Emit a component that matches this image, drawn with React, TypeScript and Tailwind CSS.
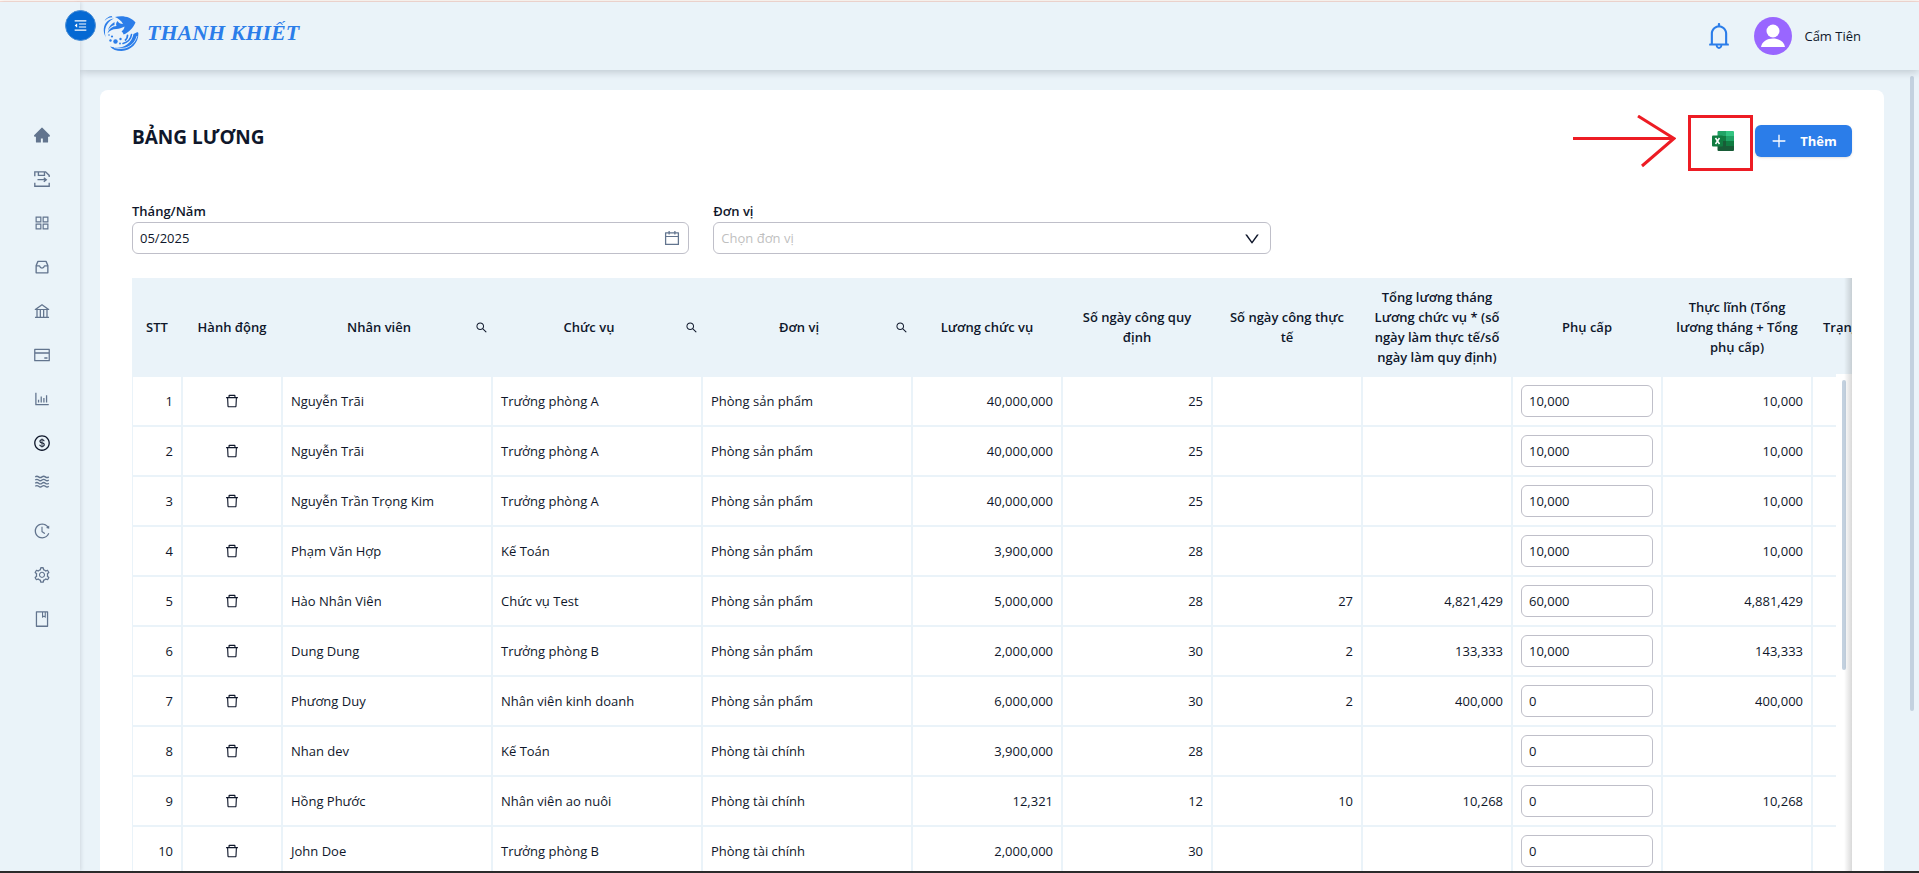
import React from 'react';
import {
  AiFillHome,
  AiOutlineAppstore,
  AiOutlineBank,
  AiOutlineBarChart,
  AiOutlineBell,
  AiOutlineBook,
  AiOutlineCalendar,
  AiOutlineCreditCard,
  AiOutlineDelete,
  AiOutlineDollarCircle,
  AiOutlineDown,
  AiOutlineHistory,
  AiOutlineMenuFold,
  AiOutlinePlus,
  AiOutlineSearch,
  AiOutlineSetting,
} from 'react-icons/ai';
import clsx from 'clsx';

interface SalaryRow {
  name: string;
  position: string;
  unit: string;
  base: string;
  required: string;
  actual: string;
  total: string;
  allowance: string;
  net: string;
}

const ROWS: SalaryRow[] = [
  { name: 'Nguyễn Trãi', position: 'Trưởng phòng A', unit: 'Phòng sản phẩm', base: '40,000,000', required: '25', actual: '', total: '', allowance: '10,000', net: '10,000' },
  { name: 'Nguyễn Trãi', position: 'Trưởng phòng A', unit: 'Phòng sản phẩm', base: '40,000,000', required: '25', actual: '', total: '', allowance: '10,000', net: '10,000' },
  { name: 'Nguyễn Trần Trọng Kim', position: 'Trưởng phòng A', unit: 'Phòng sản phẩm', base: '40,000,000', required: '25', actual: '', total: '', allowance: '10,000', net: '10,000' },
  { name: 'Phạm Văn Hợp', position: 'Kế Toán', unit: 'Phòng sản phẩm', base: '3,900,000', required: '28', actual: '', total: '', allowance: '10,000', net: '10,000' },
  { name: 'Hào Nhân Viên', position: 'Chức vụ Test', unit: 'Phòng sản phẩm', base: '5,000,000', required: '28', actual: '27', total: '4,821,429', allowance: '60,000', net: '4,881,429' },
  { name: 'Dung Dung', position: 'Trưởng phòng B', unit: 'Phòng sản phẩm', base: '2,000,000', required: '30', actual: '2', total: '133,333', allowance: '10,000', net: '143,333' },
  { name: 'Phương Duy', position: 'Nhân viên kinh doanh', unit: 'Phòng sản phẩm', base: '6,000,000', required: '30', actual: '2', total: '400,000', allowance: '0', net: '400,000' },
  { name: 'Nhan dev', position: 'Kế Toán', unit: 'Phòng tài chính', base: '3,900,000', required: '28', actual: '', total: '', allowance: '0', net: '' },
  { name: 'Hồng Phước', position: 'Nhân viên ao nuôi', unit: 'Phòng tài chính', base: '12,321', required: '12', actual: '10', total: '10,268', allowance: '0', net: '10,268' },
  { name: 'John Doe', position: 'Trưởng phòng B', unit: 'Phòng tài chính', base: '2,000,000', required: '30', actual: '', total: '', allowance: '0', net: '' },
];

const COLUMNS = [
  { title: 'STT', width: 'w-[50px]' },
  { title: 'Hành động', width: 'w-[100px]' },
  { title: 'Nhân viên', width: 'w-[210px]', search: true },
  { title: 'Chức vụ', width: 'w-[210px]', search: true },
  { title: 'Đơn vị', width: 'w-[210px]', search: true },
  { title: 'Lương chức vụ', width: 'w-[150px]' },
  { title: 'Số ngày công quy định', width: 'w-[150px]' },
  { title: 'Số ngày công thực tế', width: 'w-[150px]' },
  { title: 'Tổng lương tháng Lương chức vụ * (số ngày làm thực tế/số ngày làm quy định)', width: 'w-[150px]' },
  { title: 'Phụ cấp', width: 'w-[150px]' },
  { title: 'Thực lĩnh (Tổng lương tháng + Tổng phụ cấp)', width: 'w-[150px]' },
  { title: 'Trạng thái', width: 'w-[80px]' },
];

const SaveMoveIcon = ({ size }: { size: number }) => (
  <svg width={size} height={size} viewBox="0 0 16 16" fill="none" stroke="currentColor" strokeWidth="1.2">
    <path d="M1.6 5.6V1.6h9.6l3.2 3.2v1.4M4.8 1.8v3h5.4v-3M1.6 11.4v3h12.8v-3M4 8.6h7.6M9.6 6.8l2.2 1.8-2.2 1.8" />
  </svg>
);

const InboxIcon = ({ size }: { size: number }) => (
  <svg width={size} height={size} viewBox="0 0 16 16" fill="none" stroke="currentColor" strokeWidth="1.2" strokeLinejoin="round">
    <path d="M4.4 3h7.200l1.600 3.600v6.600H2.800V6.600zM2.800 7h3c.4 1.400 1.100 2 2.200 2s1.800-.6 2.200-2h3" />
  </svg>
);

const WavesIcon = ({ size }: { size: number }) => (
  <svg width={size} height={size} viewBox="0 0 16 16" fill="none" stroke="currentColor" strokeWidth="1.2" overflow="visible">
    {[-1, 1.8, 4.6, 7.4].map((y) => (
      <path key={y} d={`M2 ${y}q1.500-1.200 3 0t3 0 3 0 3 0`} />
    ))}
  </svg>
);

const MENU = [
  { label: 'Trang chủ', icon: AiFillHome },
  { label: 'Nhập xuất', icon: SaveMoveIcon },
  { label: 'Danh mục', icon: AiOutlineAppstore },
  { label: 'Kho', icon: InboxIcon },
  { label: 'Ngân hàng', icon: AiOutlineBank },
  { label: 'Thanh toán', icon: AiOutlineCreditCard },
  { label: 'Báo cáo', icon: AiOutlineBarChart },
  { label: 'Bảng lương', icon: AiOutlineDollarCircle, active: true },
  { label: 'Ao nuôi', icon: WavesIcon },
  { label: 'Lịch sử', icon: AiOutlineHistory },
  { label: 'Cài đặt', icon: AiOutlineSetting },
  { label: 'Hướng dẫn', icon: AiOutlineBook },
];

const FishLogo = () => (
  <svg width="36" height="36" viewBox="0 0 36 36" fill="#2b7de9">
    {/* Body and fin */}
    <path d="M12 2C19 0 28 1.500 32.500 7.500 30 13 26 17.500 20.500 19.500c-.2-1.500-1-2.500-2-3 2-1.500 2.800-3 3-5-3 1.200-5.200 2.500-8 2.500-4 0-7 1.500-9 4.500C6 13.500 9.500 11.300 13.500 11c-.8-1.500-.4-3.500 1-5 1 2 3 3 5.500 3C18.500 6 15.500 3.500 12 2z" />
    <path d="M11 3.500C5.500 6 2 11 2 17c0 2.500.3 4 1 5.500-2.800-4.500-3-10-.5-14C4.500 5.500 7.500 4 11 3.500zM8.500 1C5.500 1.500 3 3.200 1.500 6 3.500 3.800 6 2.500 9.500 2.300zM11.500 7C8 9 5.500 12 5 15.500 6.500 12.500 8.500 11 11.500 10z" />
    {/* Wave */}
    <path d="M33.500 17.500c1-.7 1.800-.3 1.900 1C35.500 28 28 35.500 18.500 36c-5 0-9-1.500-11.500-4.500 6 2 12 1.500 17-2 4-2.800 5.500-6.500 6.500-10.500z" />
    <path d="M34 21c-1.500 6-6 10.500-12 12-4 .8-8 .5-11-.5" fill="none" stroke="#eaf3f9" strokeWidth=".8" />
    <path d="M28.500 19.500c-.5 4-3.500 7.500-8.500 9" fill="none" stroke="#2b7de9" strokeWidth="1.600" strokeLinecap="round" />
    <path d="M24.500 20.500c0 2-.8 3.500-2 4.500" fill="none" stroke="#2b7de9" strokeWidth="1.800" strokeLinecap="round" />
    <circle cx="12.500" cy="26.500" r="2.200" />
    <circle cx="7.500" cy="25.500" r="1.200" />
    <circle cx="17.500" cy="24" r="1.200" />
    <circle cx="9" cy="21.500" r="1.100" />
    <circle cx="6" cy="20" r=".8" />
    <circle cx="17" cy="28.500" r=".9" />
  </svg>
);

const ExcelIcon = () => (
  <svg width="22" height="20" viewBox="0 0 22 20" aria-hidden="true">
    <path d="M5.500 1q0-1 1-1H14v5H5.500z" fill="#21a366" />
    <path d="M14 0h7q1 0 1 1v4h-8z" fill="#33c481" />
    <path d="M5.500 5H14v5H5.500z" fill="#107c41" />
    <path d="M14 5h8v5h-8z" fill="#21a366" />
    <path d="M5.500 10H14v5H5.500z" fill="#185c37" />
    <path d="M14 10h8v5h-8z" fill="#107c41" />
    <path d="M5.500 15H22v4q0 1-1 1H6.500q-1 0-1-1z" fill="#185c37" />
    <rect y="4.500" width="11" height="11" rx="1" fill="#107c41" />
    <path d="M3.500 7l4 6M7.500 7l-4 6" stroke="#fff" strokeWidth="1.500" />
  </svg>
);

const Sidebar = () => (
  <aside className="relative z-20 w-20 shrink-0 bg-[#eaf3f9] shadow-[1px_0_4px_rgba(15,23,42,0.12)]">
    <button
      aria-label="Thu gọn menu"
      className="absolute -right-4 top-2 flex size-[31px] items-center justify-center rounded-full border border-[#4c8fd6] bg-[#0569d3] text-white"
    >
      <AiOutlineMenuFold size={15} />
    </button>
    <nav className="flex flex-col items-center gap-[26px] pt-[124px] pl-1">
      {MENU.map(({ label, icon: Icon, active }) => (
        <a key={label} href="#" aria-label={label} className={clsx(active ? 'text-slate-900' : 'text-slate-500')}>
          <Icon size={18} />
        </a>
      ))}
    </nav>
  </aside>
);

const TopBar = () => (
  <header className="relative z-10 flex h-[68px] shrink-0 items-center justify-between bg-[#eaf3f9] pl-[23px] pr-[58px] shadow-[0_2px_8px_rgba(15,23,42,0.2)]">
    <a href="#" className="flex items-center gap-2 pb-[6px]">
      <FishLogo />
      <span className="font-['Liberation_Serif',serif] text-[22px] font-bold italic leading-7 text-[#2b7de9]">THANH KHIẾT</span>
    </a>
    <div className="flex items-center">
      <button aria-label="Thông báo" className="text-[#2b7de9]">
        <AiOutlineBell size={30} />
      </button>
      <svg className="ml-5" width="38" height="38" viewBox="0 0 38 38" aria-hidden="true">
        <circle cx="19" cy="19" r="19" fill="#9966ff" />
        <circle cx="19" cy="14" r="6.500" fill="#fff" />
        <path d="M7 30c1-5.500 6-8.500 12-8.500S30 24.500 31 30z" fill="#fff" />
      </svg>
      <span className="ml-3">Cẩm Tiên</span>
    </div>
  </header>
);

const SalaryTable = () => (
  <div className="relative mt-6 overflow-hidden">
    <table className="w-[1760px] table-fixed border-separate border-spacing-0">
      <thead>
        <tr>
          {COLUMNS.map((col) => (
            <th
              key={col.title}
              scope="col"
              className={clsx('border border-[#eaf3f9] bg-[#eaf3f9] py-2 text-center font-semibold leading-5', col.search ? 'pl-2 pr-[3px]' : 'px-[10px]', col.width)}
            >
              {col.search ? (
                <div className="flex items-center">
                  <span className="flex-1">{col.title}</span>
                  <button aria-label={`Tìm ${col.title}`} className="ml-2">
                    <AiOutlineSearch size={13} />
                  </button>
                </div>
              ) : (
                <span className={clsx(col.title === 'Trạng thái' && 'whitespace-nowrap')}>{col.title}</span>
              )}
            </th>
          ))}
        </tr>
      </thead>
      <tbody className="[&_td]:border [&_td]:border-[#eaf3f9] [&_td]:p-2">
        {ROWS.map((row, idx) => (
          <tr key={idx}>
            <td className="text-right">{idx + 1}</td>
            <td>
              <button aria-label={`Xóa ${row.name}`} className="mx-auto block">
                <AiOutlineDelete size={16} />
              </button>
            </td>
            <td>{row.name}</td>
            <td>{row.position}</td>
            <td>{row.unit}</td>
            <td className="text-right">{row.base}</td>
            <td className="text-right">{row.required}</td>
            <td className="text-right">{row.actual}</td>
            <td className="text-right">{row.total}</td>
            <td>
              <input
                aria-label={`Phụ cấp ${row.name}`}
                defaultValue={row.allowance}
                className="block h-8 w-full rounded-md border border-[#bfbfc9] bg-white px-[7px] outline-none"
              />
            </td>
            <td className="text-right">{row.net}</td>
            <td />
          </tr>
        ))}
      </tbody>
    </table>

    {/* Scroll gutter and edge shadow */}
    <div className="absolute bottom-0 right-0 top-24 w-4 bg-white">
      <div className="ml-[6px] mt-[6px] h-[290px] w-1 rounded-full bg-[#c3d1df]" />
    </div>
    <div className="pointer-events-none absolute inset-y-0 right-0 w-2 bg-linear-to-r from-transparent to-black/15" />
  </div>
);

export default function App() {
  return (
    <div className="flex h-screen overflow-hidden border-b-2 border-[#2b2b2b] bg-[#eaf3f9] font-['Open_Sans','Noto_Sans',sans-serif] text-[13px] leading-5 text-slate-900">
      <div className="flex min-w-0 flex-1 flex-col border-t border-[#fff8f4]">
        <div className="h-px shrink-0 bg-[#f8ddd6]" />
        <div className="flex min-h-0 flex-1">
          <Sidebar />
          <div className="flex min-w-0 flex-1 flex-col">
            <TopBar />
            <div className="flex min-h-0 flex-1">
              <main className="min-w-0 flex-1 overflow-hidden p-5">
                <section className="rounded-lg bg-white p-8">
                  <div className="flex h-[38px] items-center justify-between">
                    <h1 className="self-start text-[19px] font-bold leading-[30px]">BẢNG LƯƠNG</h1>
                    <div className="relative flex items-center">
                      <button aria-label="Xuất Excel" className="mr-[21px]">
                        <ExcelIcon />
                      </button>
                      <button className="flex h-8 w-[97px] items-center justify-center gap-3 rounded-md bg-[#2b7de9] text-[13px] font-bold text-white shadow-sm">
                        <AiOutlinePlus size={18} />
                        Thêm
                      </button>
                      {/* Highlight around the export button */}
                      <div className="pointer-events-none absolute right-[99px] -top-[10px] flex items-center gap-3">
                        <svg width="103" height="56" viewBox="0 0 103 56" fill="none" stroke="#ed1c24" strokeWidth="3">
                          <path d="M0 23.500h100M65 1l36 22.500L69 51" />
                        </svg>
                        <div className="h-14 w-[65px] border-3 border-[#ed1c24]" />
                      </div>
                    </div>
                  </div>

                  <div className="mt-10 grid grid-cols-3 gap-6">
                    <div>
                      <label htmlFor="month" className="block font-semibold leading-[22px]">Tháng/Năm</label>
                      <div className="flex h-8 items-center rounded-md border border-[#bfbfc9] px-[7px]">
                        <input id="month" defaultValue="05/2025" className="min-w-0 flex-1 outline-none" />
                        <AiOutlineCalendar size={18} className="text-slate-500" />
                      </div>
                    </div>
                    <div>
                      <label htmlFor="unit" className="block font-semibold leading-[22px]">Đơn vị</label>
                      <div className="relative">
                        <select id="unit" defaultValue="" className="h-8 w-full appearance-none rounded-md border border-[#bfbfc9] bg-white px-[7px] text-[#bfbfbf] outline-none">
                          <option value="">Chọn đơn vị</option>
                          <option>Phòng sản phẩm</option>
                          <option>Phòng tài chính</option>
                        </select>
                        <AiOutlineDown size={18} className="pointer-events-none absolute right-[10px] top-2" />
                      </div>
                    </div>
                  </div>

                  <SalaryTable />
                </section>
              </main>
              <div className="w-[15px] shrink-0 pt-[6px]">
                <div className="ml-[6px] h-[635px] w-1 rounded-full bg-[#c3d1df]" />
              </div>
            </div>
          </div>
        </div>
      </div>
    </div>
  );
}
